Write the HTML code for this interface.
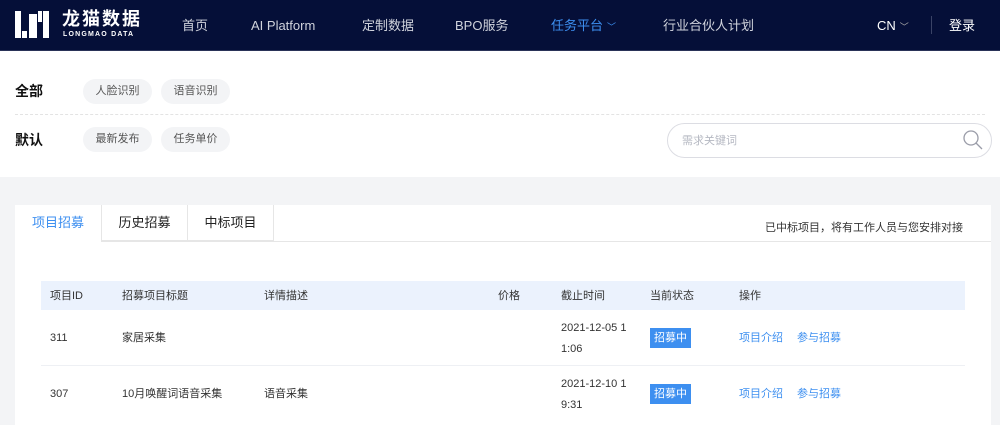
<!DOCTYPE html>
<html><head><meta charset="utf-8"><style>
*{margin:0;padding:0;box-sizing:border-box}
body{width:1000px;height:415px;overflow:hidden;background:#f3f4f6;font-family:"Liberation Sans","Noto Sans CJK SC",sans-serif;position:relative;color:#333}
.nav{position:absolute;left:0;top:0;width:1000px;height:51px;background:#050f38;border-bottom:1px solid #2a3358}
.ni{position:absolute;top:17px;font-size:13px;line-height:17px;color:#d0d3dc}
.car{font-size:9px;color:#aaa;margin-left:4px}
.a{position:absolute}
.filter{position:absolute;left:0;top:51px;width:1000px;height:126px;background:#fff}
.chip{position:absolute;height:25px;width:69px;border-radius:13px;background:#f3f4f6;font-size:11px;color:#555;text-align:center;line-height:25px}
.lbl{position:absolute;font-size:14px;line-height:18px;font-weight:bold;color:#111}
.card{position:absolute;left:15px;top:205px;width:976px;height:220px;background:#fff}
.tab{position:absolute;top:0;height:36px;font-size:13px;text-align:center;line-height:36px;color:#222;background:#fff;border-right:1px solid #e6e6e6}
.th{position:absolute;top:288px;font-size:11px;line-height:16px;color:#333}
.td{position:absolute;font-size:11px;line-height:16px;color:#333}
.badge{position:absolute;width:41px;height:20px;background:#3d8ff0;color:#fff;font-size:11px;text-align:center;line-height:20px}
.lk{position:absolute;font-size:11px;line-height:16px;color:#3d8ff0}
</style></head><body>
<div class="nav">
  <div class="a" style="left:15px;top:11px;width:6px;height:27px;background:#fff"></div>
  <div class="a" style="left:22px;top:31px;width:5px;height:7px;background:#fff"></div>
  <div class="a" style="left:29px;top:14px;width:8px;height:24px;background:#fff"></div>
  <div class="a" style="left:38px;top:11px;width:4px;height:11px;background:#fff"></div>
  <div class="a" style="left:43px;top:11px;width:6px;height:27px;background:#fff"></div>
  <div class="a" style="left:62px;top:8px;font-size:18px;line-height:22px;font-weight:bold;color:#fff;letter-spacing:2px">龙猫数据</div>
  <div class="a" style="left:63px;top:31px;font-size:7px;line-height:8px;font-weight:bold;color:#fff;letter-spacing:1.2px">LONGMAO DATA</div>
  <div class="ni" style="left:182px">首页</div>
  <div class="ni" style="left:251px">AI Platform</div>
  <div class="ni" style="left:362px">定制数据</div>
  <div class="ni" style="left:455px">BPO服务</div>
  <div class="ni" style="left:551px;color:#3d8ff0">任务平台<span class="car" style="color:#3d8ff0">﹀</span></div>
  <div class="ni" style="left:663px">行业合伙人计划</div>
  <div class="ni" style="left:877px;color:#fff">CN<span class="car">﹀</span></div>
  <div class="a" style="left:931px;top:16px;width:1px;height:18px;background:#3a4366"></div>
  <div class="ni" style="left:949px;color:#fff">登录</div>
</div>
<div class="filter">
  <div class="lbl" style="left:15px;top:31px">全部</div>
  <div class="chip" style="left:83px;top:28px">人脸识别</div>
  <div class="chip" style="left:161px;top:28px">语音识别</div>
  <div class="a" style="left:15px;top:63px;width:970px;border-top:1px dashed #e3e3e3"></div>
  <div class="lbl" style="left:15px;top:80px">默认</div>
  <div class="chip" style="left:83px;top:76px">最新发布</div>
  <div class="chip" style="left:161px;top:76px">任务单价</div>
  <div class="a" style="left:667px;top:72px;width:325px;height:35px;border:1px solid #dcdde3;border-radius:18px"></div>
  <div class="a" style="left:682px;top:83px;font-size:11px;line-height:14px;color:#b5b8c2">需求关键词</div>
  <svg class="a" style="left:962px;top:78px" width="22" height="22"><circle cx="9" cy="9" r="7" fill="none" stroke="#9a9ca8" stroke-width="1.3"/><path d="M14 14 L20 20" stroke="#9a9ca8" stroke-width="1.3"/></svg>
</div>
<div class="card">
  <div class="a" style="left:0;top:36px;width:976px;border-top:1px solid #e6e6e6"></div>
  <div class="tab" style="left:0;width:87px;color:#3d8ff0;height:37px">项目招募</div>
  <div class="tab" style="left:87px;width:86px;border-bottom:1px solid #e6e6e6">历史招募</div>
  <div class="tab" style="left:173px;width:86px;border-bottom:1px solid #e6e6e6">中标项目</div>
  <div class="a" style="left:750px;top:15px;font-size:11px;line-height:16px;color:#333">已中标项目，将有工作人员与您安排对接</div>
</div>
<div class="a" style="left:41px;top:281px;width:924px;height:29px;background:#ebf2fd"></div>
<div class="th" style="left:50px">项目ID</div><div class="th" style="left:122px">招募项目标题</div><div class="th" style="left:264px">详情描述</div><div class="th" style="left:498px">价格</div><div class="th" style="left:561px">截止时间</div><div class="th" style="left:650px">当前状态</div><div class="th" style="left:739px">操作</div>
<div class="td" style="left:50px;top:330px">311</div><div class="td" style="left:122px;top:330px">家居采集</div>
<div class="td" style="left:561px;top:318px;line-height:21px">2021-12-05 1<br>1:06</div>
<div class="badge" style="left:650px;top:328px">招募中</div>
<div class="lk" style="left:739px;top:330px">项目介绍</div><div class="lk" style="left:797px;top:330px">参与招募</div>
<div class="a" style="left:41px;top:365px;width:924px;border-top:1px solid #eef0f4"></div>
<div class="td" style="left:50px;top:386px">307</div><div class="td" style="left:122px;top:386px">10月唤醒词语音采集</div><div class="td" style="left:264px;top:386px">语音采集</div>
<div class="td" style="left:561px;top:374px;line-height:21px">2021-12-10 1<br>9:31</div>
<div class="badge" style="left:650px;top:384px">招募中</div>
<div class="lk" style="left:739px;top:386px">项目介绍</div><div class="lk" style="left:797px;top:386px">参与招募</div>
</body></html>
